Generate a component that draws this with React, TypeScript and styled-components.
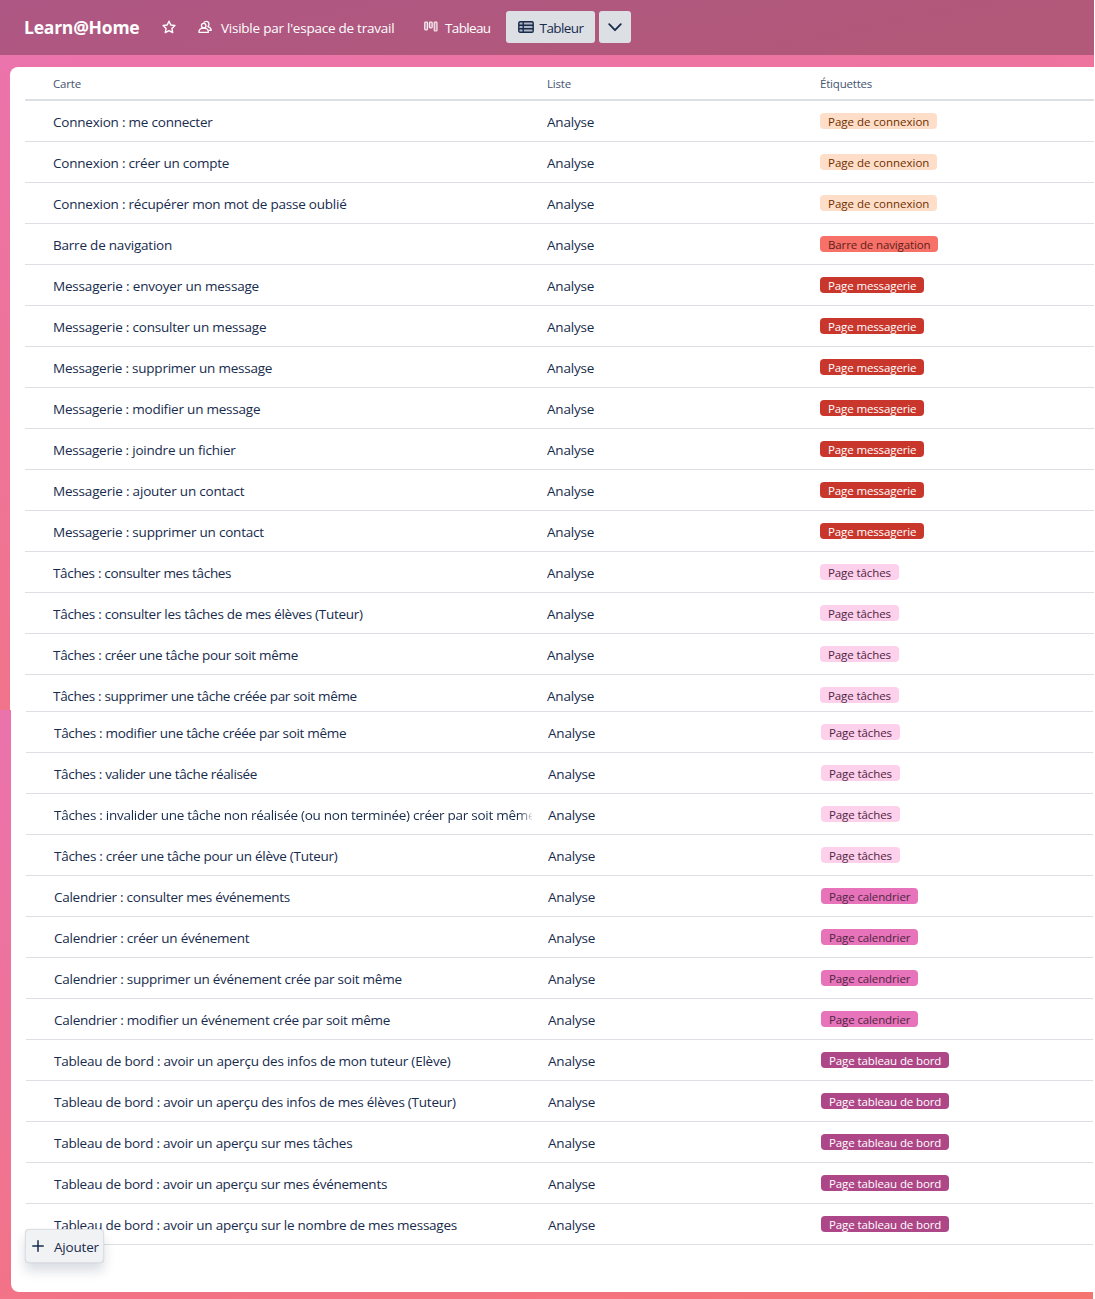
import React from 'react';
import styled, { createGlobalStyle } from 'styled-components';

const Global = createGlobalStyle`
  *, *::before, *::after { box-sizing: border-box; }
  body {
    margin: 0;
    background: #fff;
    color: #172b4d;
    font-family: "Segoe UI", "Open Sans", "Noto Sans", sans-serif;
    font-size: 13.5px;
    overflow: hidden;
  }
`;

const Page = styled.div`
  display: flex;
  flex-direction: column;
  width: 1095px;
  height: 1299px;
`;

const TopPane = styled.div`
  display: flex;
  flex-direction: column;
  width: 1094px;
  height: 710px;
  overflow: hidden;
  background: linear-gradient(168deg, #eb74b0 0%, #ed73a0 25%, #f27487 85%, #f4757b 100%);
`;

const BottomPane = styled.div`
  width: 1093px;
  height: 589px;
  padding-left: 11px;
  background: linear-gradient(168deg, #ea73ad 0%, #ee739a 40%, #f4737f 85%, #f6746f 100%);
`;

const Header = styled.header`
  display: flex;
  align-items: center;
  flex: none;
  height: 55px;
  padding: 0 24px 1px;
  background: linear-gradient(168deg, #ae5784, #b25878 90%);
  color: #fff;
`;

const Title = styled.h1`
  margin: 0 23px 0 0;
  width: 115px;
  font-size: 17.5px;
  line-height: 24px;
  font-weight: 700;
  letter-spacing: -0.22px;
  white-space: nowrap;
`;

const HeaderItem = styled.div<{ $width: number; $gap: number; $tracking?: number }>`
  display: flex;
  align-items: center;
  gap: ${(p) => p.$gap}px;
  width: ${(p) => p.$width}px;
  height: 32px;
  padding-top: 2px;
  letter-spacing: ${(p) => p.$tracking ?? 0}px;
  white-space: nowrap;
  svg { flex: none; margin-top: -3px; }
`;

const ViewButton = styled.button<{ $width: number }>`
  display: flex;
  align-items: center;
  justify-content: center;
  gap: 6px;
  width: ${(p) => p.$width}px;
  height: 32px;
  margin: 0 4px 0 0;
  padding: 0;
  border: 0;
  border-radius: 3px;
  background: #dcdfe4;
  color: #172b4d;
  font: inherit;
  letter-spacing: -0.6px;
  span { padding-top: 2px; }
  svg { margin-top: -1px; }
  svg:only-child { margin-top: 1px; }
`;

const TopSheet = styled.div`
  flex: 1;
  margin: 12px 0 0 10px;
  padding-left: 15px;
  border-top-left-radius: 8px;
  background: #fff;
`;

const BottomSheet = styled.div`
  height: 582px;
  padding: 1px 0 0 15px;
  border-bottom-left-radius: 8px;
  background: #fff;
`;

const BottomRows = styled.div`
  border-top: 1px solid #dcdfe4;
`;

const columns = '494px 273px 1fr';

const HeadRow = styled.div`
  display: grid;
  grid-template-columns: ${columns};
  height: 34px;
  padding-left: 28px;
  border-bottom: 2px solid #dcdfe4;
  color: #44546f;
  font-size: 11.5px;
  font-weight: 500;
  letter-spacing: -0.2px;
  line-height: 33px;
`;

const Row = styled.div<{ $short?: boolean }>`
  display: grid;
  grid-template-columns: ${columns};
  align-items: start;
  height: ${(p) => (p.$short ? 36 : 41)}px;
  padding-left: 28px;
  border-bottom: ${(p) => (p.$short ? 0 : 1)}px solid #dcdfe4;
`;

const Cell = styled.div<{ $tracking: number }>`
  width: 478px;
  padding-top: 10px;
  line-height: 22px;
  letter-spacing: ${(p) => p.$tracking}px;
  white-space: nowrap;
  overflow: hidden;
`;

const FadeCell = styled(Cell)`
  mask-image: linear-gradient(to right, #000 465px, transparent 480px);
`;

const ListCell = styled(Cell)`
  width: auto;
`;

type LabelKind = 'connexion' | 'navigation' | 'messagerie' | 'taches' | 'calendrier' | 'bord';

interface LabelStyle { text: string; bg: string; fg: string; width: number; tracking: number }

const labels: Record<LabelKind, LabelStyle> = {
  connexion: { text: 'Page de connexion', bg: '#fedec8', fg: '#702e00', width: 117, tracking: 0 },
  navigation: { text: 'Barre de navigation', bg: '#f87168', fg: '#5d1f1a', width: 118, tracking: -0.13 },
  messagerie: { text: 'Page messagerie', bg: '#c9372c', fg: '#ffffff', width: 104, tracking: -0.12 },
  taches: { text: 'Page tâches', bg: '#fdd0ec', fg: '#50253f', width: 79, tracking: -0.1 },
  calendrier: { text: 'Page calendrier', bg: '#e774bb', fg: '#50253f', width: 97, tracking: -0.12 },
  bord: { text: 'Page tableau de bord', bg: '#ae4787', fg: '#ffffff', width: 128, tracking: -0.11 },
};

const Label = styled.span<{ $bg: string; $fg: string; $width: number; $tracking: number }>`
  width: ${(p) => p.$width}px;
  height: 16px;
  margin-top: 12px;
  padding-left: 8px;
  border-radius: 4px;
  background: ${(p) => p.$bg};
  color: ${(p) => p.$fg};
  font-size: 11.5px;
  letter-spacing: ${(p) => p.$tracking}px;
  line-height: 17px;
  white-space: nowrap;
`;

const AddButton = styled.button`
  position: relative;
  display: flex;
  align-items: center;
  gap: 10px;
  width: 79px;
  height: 34px;
  margin: -16px 0 0 -1px;
  padding: 2px 0 0 6px;
  border: 1px solid #dcdfe4;
  border-radius: 4px;
  background: #f1f2f4;
  color: #172b4d;
  font: inherit;
  letter-spacing: -0.2px;
  box-shadow: 0 8px 12px rgba(9, 30, 66, 0.15), 0 0 1px rgba(9, 30, 66, 0.2);
  svg { flex: none; margin-top: -3px; }
`;

interface Card { name: string; label: LabelKind; tracking: number; fade?: boolean }

const topCards: Card[] = [
  { name: 'Connexion : me connecter', label: 'connexion', tracking: -0.22 },
  { name: 'Connexion : créer un compte', label: 'connexion', tracking: -0.22 },
  { name: 'Connexion : récupérer mon mot de passe oublié', label: 'connexion', tracking: -0.22 },
  { name: 'Barre de navigation', label: 'navigation', tracking: -0.21 },
  { name: 'Messagerie : envoyer un message', label: 'messagerie', tracking: -0.18 },
  { name: 'Messagerie : consulter un message', label: 'messagerie', tracking: -0.2 },
  { name: 'Messagerie : supprimer un message', label: 'messagerie', tracking: -0.23 },
  { name: 'Messagerie : modifier un message', label: 'messagerie', tracking: -0.22 },
  { name: 'Messagerie : joindre un fichier', label: 'messagerie', tracking: -0.22 },
  { name: 'Messagerie : ajouter un contact', label: 'messagerie', tracking: -0.19 },
  { name: 'Messagerie : supprimer un contact', label: 'messagerie', tracking: -0.21 },
  { name: 'Tâches : consulter mes tâches', label: 'taches', tracking: -0.33 },
  { name: 'Tâches : consulter les tâches de mes élèves (Tuteur)', label: 'taches', tracking: -0.28 },
  { name: 'Tâches : créer une tâche pour soit même', label: 'taches', tracking: -0.29 },
  { name: 'Tâches : supprimer une tâche créée par soit même', label: 'taches', tracking: -0.31 },
];

const bottomCards: Card[] = [
  { name: 'Tâches : modifier une tâche créée par soit même', label: 'taches', tracking: -0.3 },
  { name: 'Tâches : valider une tâche réalisée', label: 'taches', tracking: -0.34 },
  { name: 'Tâches : invalider une tâche non réalisée (ou non terminée) créer par soit même', label: 'taches', tracking: -0.27, fade: true },
  { name: 'Tâches : créer une tâche pour un élève (Tuteur)', label: 'taches', tracking: -0.27 },
  { name: 'Calendrier : consulter mes événements', label: 'calendrier', tracking: -0.27 },
  { name: 'Calendrier : créer un événement', label: 'calendrier', tracking: -0.26 },
  { name: 'Calendrier : supprimer un événement crée par soit même', label: 'calendrier', tracking: -0.26 },
  { name: 'Calendrier : modifier un événement crée par soit même', label: 'calendrier', tracking: -0.25 },
  { name: 'Tableau de bord : avoir un aperçu des infos de mon tuteur (Elève)', label: 'bord', tracking: -0.22 },
  { name: 'Tableau de bord : avoir un aperçu des infos de mes élèves (Tuteur)', label: 'bord', tracking: -0.24 },
  { name: 'Tableau de bord : avoir un aperçu sur mes tâches', label: 'bord', tracking: -0.25 },
  { name: 'Tableau de bord : avoir un aperçu sur mes événements', label: 'bord', tracking: -0.26 },
  { name: 'Tableau de bord : avoir un aperçu sur le nombre de mes messages', label: 'bord', tracking: -0.25 },
];

function CardRow({ card, short }: { card: Card; short?: boolean }) {
  const label = labels[card.label];
  const Name = card.fade ? FadeCell : Cell;
  return (
    <Row $short={short}>
      <Name $tracking={card.tracking}>{card.name}</Name>
      <ListCell $tracking={-0.2}>Analyse</ListCell>
      <Label $bg={label.bg} $fg={label.fg} $width={label.width} $tracking={label.tracking}>{label.text}</Label>
    </Row>
  );
}

const StarIcon = () => (
  <svg width="14" height="14" viewBox="0 0 14 14" fill="none" stroke="currentColor" strokeWidth="1.4" strokeLinejoin="round">
    <path d="M7 1.2 8.8 5l4.1.5-3 2.9.8 4.2L7 10.6l-3.7 2 .8-4.2-3-2.9L5.2 5Z" />
  </svg>
);

const PeopleIcon = () => (
  <svg width="14" height="14" viewBox="0 0 14 14" fill="none" stroke="currentColor" strokeWidth="1.3" strokeLinejoin="round">
    <circle cx="5.7" cy="5.6" r="2.3" />
    <path d="M.9 12.3C.9 9.7 3 8.2 5.7 8.2s4.7 1.5 4.7 4.1Z" />
    <path d="M5.6 2.6C6.3 1.7 7.2 1.3 8.1 1.3c1.7 0 2.9 1.2 2.9 2.9 0 1-.4 1.8-1.1 2.4 2 .6 3.3 1.9 3.3 3.7h-2.8" />
  </svg>
);

const BoardIcon = () => (
  <svg width="14" height="12" viewBox="0 0 14 12" fill="currentColor" fillOpacity="0.3" stroke="currentColor" strokeOpacity="0.85" strokeWidth="1.2">
    <rect x="0.7" y="1.2" width="2.8" height="7.6" rx="0.7" />
    <rect x="5.4" y="1.2" width="2.8" height="5.6" rx="0.7" />
    <rect x="10.2" y="1.2" width="2.8" height="8.8" rx="0.7" />
  </svg>
);

const TableIcon = () => (
  <svg width="16" height="12" viewBox="0 0 16 12" fill="none" stroke="currentColor" strokeWidth="1.4">
    <rect x="0.8" y="0.8" width="14.4" height="10.4" rx="1.2" fill="currentColor" fillOpacity="0.22" />
    <path d="M1 4.3h14M1 7.7h14M5.2 1v10" />
  </svg>
);

const ChevronIcon = () => (
  <svg width="14" height="9" viewBox="0 0 14 9" fill="none" stroke="currentColor" strokeWidth="1.8" strokeLinecap="round" strokeLinejoin="round">
    <path d="m1.2 1.2 5.8 6 5.8-6" />
  </svg>
);

const PlusIcon = () => (
  <svg width="12" height="12" viewBox="0 0 12 12" fill="none" stroke="currentColor" strokeWidth="1.5" strokeLinecap="round">
    <path d="M6 .8v10.4M.8 6h10.4" />
  </svg>
);

export default function App() {
  return (
    <>
      <Global />
      <Page>
        <TopPane>
          <Header>
            <Title>Learn@Home</Title>
            <HeaderItem $width={36} $gap={0}><StarIcon /></HeaderItem>
            <HeaderItem $width={226} $gap={9} $tracking={-0.24}><PeopleIcon /><span>Visible par l'espace de travail</span></HeaderItem>
            <HeaderItem $width={82} $gap={7} $tracking={-0.65}><BoardIcon /><span>Tableau</span></HeaderItem>
            <ViewButton $width={89}><TableIcon /><span>Tableur</span></ViewButton>
            <ViewButton $width={32}><ChevronIcon /></ViewButton>
          </Header>
          <TopSheet>
            <HeadRow>
              <span>Carte</span>
              <span>Liste</span>
              <span>Étiquettes</span>
            </HeadRow>
            {topCards.map((card, i) => (
              <CardRow key={card.name} card={card} short={i === topCards.length - 1} />
            ))}
          </TopSheet>
        </TopPane>
        <BottomPane>
          <BottomSheet>
            <BottomRows>
              {bottomCards.map((card) => <CardRow key={card.name} card={card} />)}
            </BottomRows>
            <AddButton><PlusIcon /><span>Ajouter</span></AddButton>
          </BottomSheet>
        </BottomPane>
      </Page>
    </>
  );
}
